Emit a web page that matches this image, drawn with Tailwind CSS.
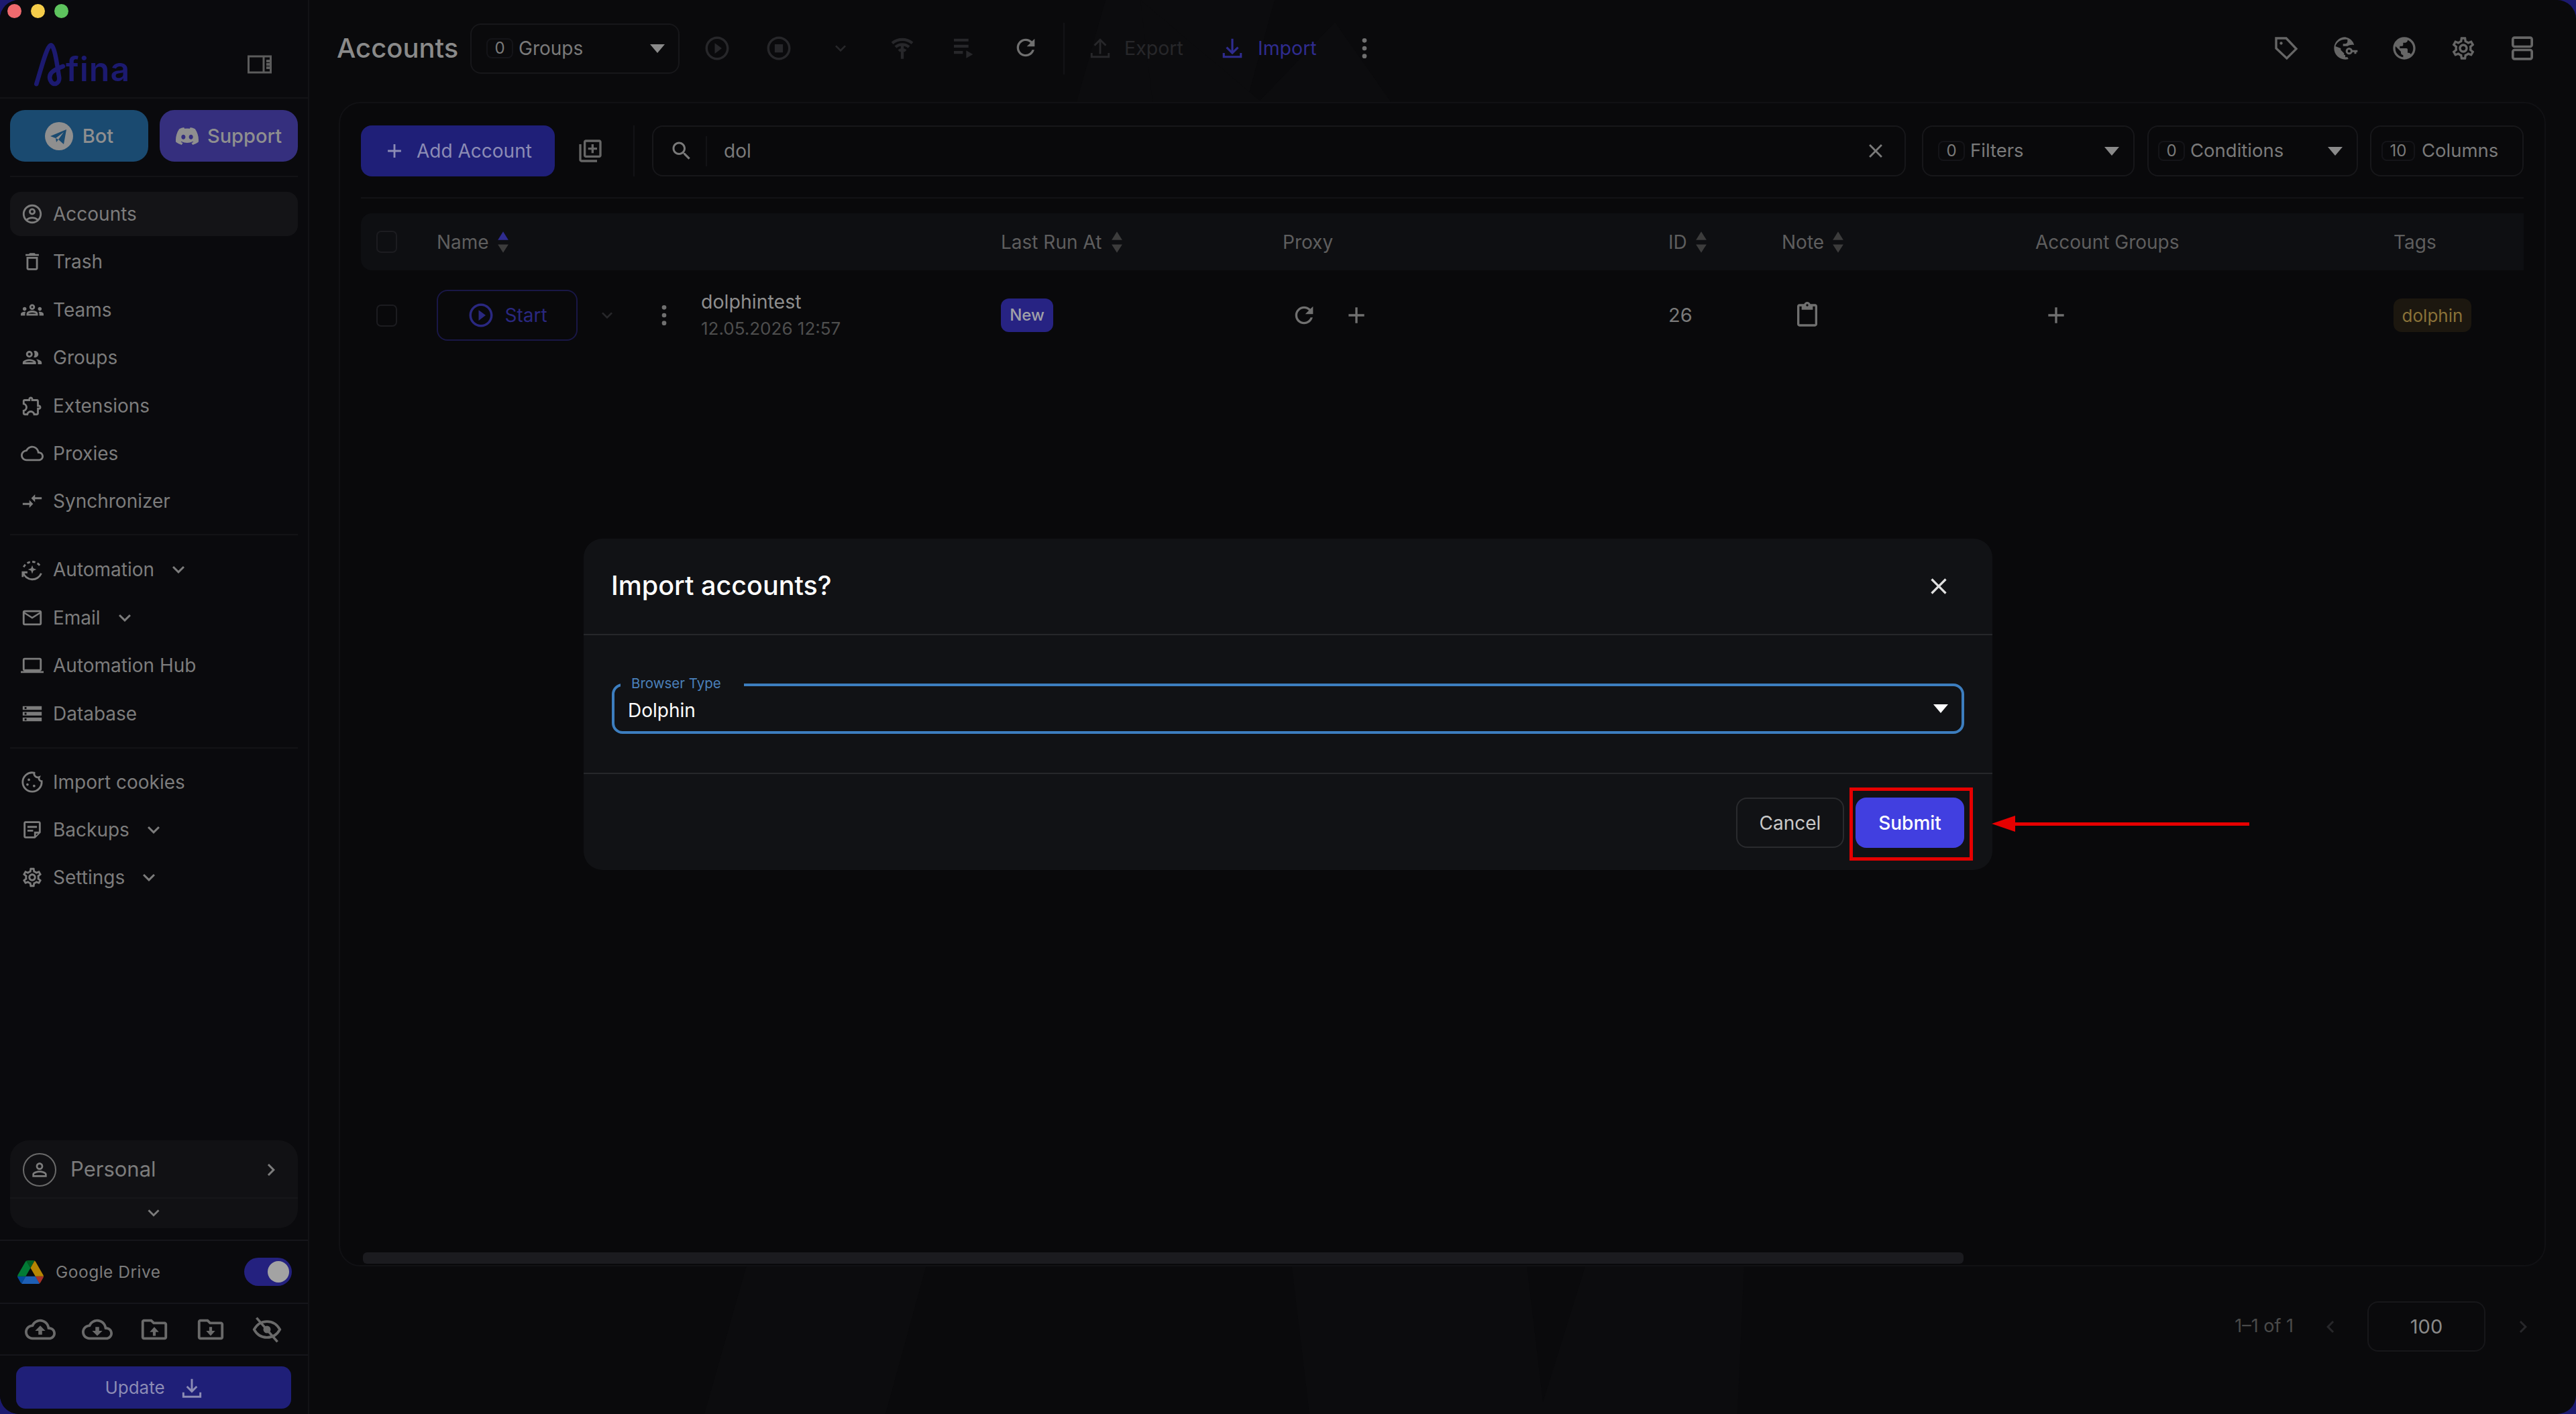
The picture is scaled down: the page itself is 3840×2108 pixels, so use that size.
<!DOCTYPE html>
<html lang="en">

<head>
    <meta charset="UTF-8">
    <title>Afina - Accounts</title>
    <script src="https://cdn.jsdelivr.net/npm/@tailwindcss/browser@4"></script>
</head>

<body class="bg-[#1c1a70] font-['Inter',sans-serif] overflow-hidden">
    <div class="relative flex h-[2108px] w-[3840px] overflow-hidden rounded-[28px] bg-[#0a0a0c]">

        <!-- window buttons -->
        <div class="absolute left-[11px] top-[6px] flex gap-[14px]">
            <span class="h-[21px] w-[21px] rounded-full bg-[#ee6a6e]"></span>
            <span class="h-[21px] w-[21px] rounded-full bg-[#f5cd4a]"></span>
            <span class="h-[21px] w-[21px] rounded-full bg-[#5ec45e]"></span>
        </div>

        <!-- sidebar -->
        <aside class="flex h-full w-[461px] shrink-0 flex-col border-r-2 border-[#131316] bg-[#0a0a0d]">
            <div class="flex h-[147px] shrink-0 items-center border-b-2 border-[#131316] pt-[47px]">
                <div class="relative ml-[50px] h-[66px] w-[145px] text-[#1c1a70]">
                    <svg class="absolute left-0 top-0 h-[66px] w-[50px]" viewBox="0 0 52 70" fill="none" stroke="currentColor" stroke-width="7" stroke-linecap="round">
                        <path d="M4 66 C12 40 20 8 26 5 C32 2 36 30 40 56 C41 66 30 70 26 60 C22 50 30 44 46 38" />
                    </svg>
                    <span class="absolute left-[48px] top-[10px] text-[50px] font-semibold leading-[60px] tracking-[1px]">fina</span>
                </div>
                <svg class="ml-auto mr-[54px] h-[30px] w-[36px] text-[#5c5c5c]" viewBox="0 0 36 30" fill="none" stroke="currentColor" stroke-width="3">
                    <rect x="1.5" y="3" width="33" height="24" />
                    <path d="M24 3v24" />
                    <path d="M28 10h7M28 15h7M28 20h7" stroke-width="4" />
                </svg>
            </div>

            <div class="flex h-[77px] shrink-0 gap-[17px] px-[15px] mt-[17px]">
                <div class="flex w-[206px] items-center justify-center gap-[14px] rounded-[22px] bg-[#1a4a70] text-[29px] font-medium text-[#8f8f8f]">
                    <svg class="h-[42px] w-[42px]" viewBox="0 0 42 42">
                        <circle cx="21" cy="21" r="21" fill="#8f8f8f" />
                        <path d="M8 21 L32 11 L28 33 L20 26 L17 30 L16 24 Z" fill="#1a4a70" />
                        <path d="M16 24 L28 15 L20 26 Z" fill="#8f8f8f" />
                    </svg>
                    <span>Bot</span>
                </div>
                <div class="flex w-[206px] items-center justify-center gap-[13px] rounded-[22px] bg-[#352f7e] text-[29px] font-medium text-[#8f8f8f]">
                    <svg class="h-[34px] w-[34px] fill-current" viewBox="0 0 24 24">
                        <path d="M20.317 4.37a19.791 19.791 0 0 0-4.885-1.515.074.074 0 0 0-.079.037c-.21.375-.444.864-.608 1.25a18.27 18.27 0 0 0-5.487 0 12.64 12.64 0 0 0-.617-1.25.077.077 0 0 0-.079-.037A19.736 19.736 0 0 0 3.677 4.37a.07.07 0 0 0-.032.027C.533 9.046-.32 13.58.099 18.057a.082.082 0 0 0 .031.057 19.9 19.9 0 0 0 5.993 3.03.078.078 0 0 0 .084-.028 14.09 14.09 0 0 0 1.226-1.994.076.076 0 0 0-.041-.106 13.107 13.107 0 0 1-1.872-.892.077.077 0 0 1-.008-.128 10.2 10.2 0 0 0 .372-.292.074.074 0 0 1 .077-.01c3.928 1.793 8.18 1.793 12.062 0a.074.074 0 0 1 .078.01c.12.098.246.198.373.292a.077.077 0 0 1-.006.127 12.299 12.299 0 0 1-1.873.892.077.077 0 0 0-.041.107c.36.698.772 1.362 1.225 1.993a.076.076 0 0 0 .084.028 19.839 19.839 0 0 0 6.002-3.03.077.077 0 0 0 .032-.054c.5-5.177-.838-9.674-3.549-13.66a.061.061 0 0 0-.031-.03zM8.02 15.33c-1.183 0-2.157-1.085-2.157-2.419 0-1.333.956-2.419 2.157-2.419 1.21 0 2.176 1.096 2.157 2.42 0 1.333-.956 2.418-2.157 2.418zm7.975 0c-1.183 0-2.157-1.085-2.157-2.419 0-1.333.955-2.419 2.157-2.419 1.21 0 2.176 1.096 2.157 2.42 0 1.333-.946 2.418-2.157 2.418z" />
                    </svg>
                    <span>Support</span>
                </div>
            </div>

            <div class="mx-[15px] mt-[21px] mb-[22px] h-[2px] shrink-0 bg-[#131316]"></div>

            <!-- main nav -->
            <nav class="flex flex-col gap-[5.4px] px-[15px] text-[28px] text-[#7c7c7c]">
                <div class="flex h-[66px] items-center gap-[13px] rounded-[16px] bg-[#141417] pl-[15px]">
                    <svg class="h-[34px] w-[36px] fill-current" viewBox="0 0 24 24"><path d="M12 2C6.48 2 2 6.48 2 12s4.48 10 10 10 10-4.48 10-10S17.52 2 12 2zM7.35 18.5C8.66 17.56 10.26 17 12 17s3.34.56 4.65 1.5c-1.31.94-2.91 1.5-4.65 1.5s-3.34-.56-4.65-1.5zm10.79-1.38C16.45 15.8 14.32 15 12 15s-4.45.8-6.14 2.12C4.7 15.73 4 13.95 4 12c0-4.42 3.58-8 8-8s8 3.58 8 8c0 1.95-.7 3.73-1.86 5.12z" /><path d="M12 6c-1.93 0-3.5 1.57-3.5 3.5S10.07 13 12 13s3.5-1.57 3.5-3.5S13.93 6 12 6zm0 5c-.83 0-1.5-.67-1.5-1.5S11.17 8 12 8s1.5.67 1.5 1.5S12.83 11 12 11z" /></svg>
                    <span>Accounts</span>
                </div>
                <div class="flex h-[66px] items-center gap-[13px] pl-[15px]">
                    <svg class="h-[34px] w-[36px] fill-current" viewBox="0 0 24 24"><path d="M16 9v10H8V9h8m-1.5-6h-5l-1 1H5v2h14V4h-3.5l-1-1zM18 7H6v12c0 1.1.9 2 2 2h8c1.1 0 2-.9 2-2V7z" /></svg>
                    <span>Trash</span>
                </div>
                <div class="flex h-[66px] items-center gap-[13px] pl-[15px]">
                    <svg class="h-[34px] w-[36px] fill-current" viewBox="0 0 24 24"><path d="M4 13c1.1 0 2-.9 2-2s-.9-2-2-2-2 .9-2 2 .9 2 2 2zm1.13 1.1c-.37-.06-.74-.1-1.13-.1-.99 0-1.93.21-2.78.58C.48 14.9 0 15.62 0 16.43V18h4.5v-1.61c0-.83.23-1.61.63-2.29zM20 13c1.1 0 2-.9 2-2s-.9-2-2-2-2 .9-2 2 .9 2 2 2zm4 3.43c0-.81-.48-1.53-1.22-1.85-.85-.37-1.79-.58-2.78-.58-.39 0-.76.04-1.13.1.4.68.63 1.46.63 2.29V18H24v-1.57zm-7.76-2.78c-1.17-.52-2.61-.9-4.24-.9-1.63 0-3.07.39-4.24.9C6.68 14.13 6 15.21 6 16.39V18h12v-1.61c0-1.18-.68-2.26-1.76-2.74zM8.07 16c.09-.23.13-.39.91-.69.97-.38 1.99-.56 3.02-.56s2.05.18 3.02.56c.77.3.81.46.91.69H8.07zM12 8c.55 0 1 .45 1 1s-.45 1-1 1-1-.45-1-1 .45-1 1-1m0-2c-1.66 0-3 1.34-3 3s1.34 3 3 3 3-1.34 3-3-1.34-3-3-3z" /></svg>
                    <span>Teams</span>
                </div>
                <div class="flex h-[66px] items-center gap-[13px] pl-[15px]">
                    <svg class="h-[34px] w-[36px] fill-current" viewBox="0 0 24 24"><path d="M9 13.75c-2.34 0-7 1.17-7 3.5V19h14v-1.75c0-2.33-4.66-3.5-7-3.5zM4.34 17c.84-.58 2.87-1.25 4.66-1.25s3.82.67 4.66 1.25H4.34zM9 12c1.93 0 3.5-1.57 3.5-3.5S10.93 5 9 5 5.5 6.57 5.5 8.5 7.07 12 9 12zm0-5c.83 0 1.5.67 1.5 1.5S9.83 10 9 10s-1.5-.67-1.5-1.5S8.17 7 9 7zm7.04 6.81c1.16.84 1.96 1.96 1.96 3.44V19h4v-1.75c0-2.02-3.5-3.17-5.96-3.44zM15 12c1.93 0 3.5-1.57 3.5-3.5S16.93 5 15 5c-.54 0-1.04.13-1.5.35.63.89 1 1.98 1 3.15s-.37 2.26-1 3.15c.46.22.96.35 1.5.35z" /></svg>
                    <span>Groups</span>
                </div>
                <div class="flex h-[66px] items-center gap-[13px] pl-[15px]">
                    <svg class="h-[34px] w-[36px] fill-current" viewBox="0 0 24 24"><path d="M10.5 4.5c.28 0 .5.22.5.5v2h6v6h2c.28 0 .5.22.5.5s-.22.5-.5.5h-2v6h-2.12c-.68-1.75-2.39-3-4.38-3s-3.7 1.25-4.38 3H4v-2.12c1.75-.68 3-2.39 3-4.38 0-1.99-1.24-3.7-2.99-4.38L4 7h6V5c0-.28.22-.5.5-.5m0-2C9.12 2.5 8 3.62 8 5H4c-1.1 0-1.99.9-1.99 2v3.8h.29c1.49 0 2.7 1.21 2.7 2.7s-1.21 2.7-2.7 2.7H2V20c0 1.1.9 2 2 2h3.8v-.3c0-1.49 1.21-2.7 2.7-2.7s2.7 1.21 2.7 2.7v.3H17c1.1 0 2-.9 2-2v-4c1.38 0 2.5-1.12 2.5-2.5S20.38 11 19 11V7c0-1.1-.9-2-2-2h-4c0-1.38-1.12-2.5-2.5-2.5z" /></svg>
                    <span>Extensions</span>
                </div>
                <div class="flex h-[66px] items-center gap-[13px] pl-[15px]">
                    <svg class="h-[34px] w-[36px] fill-current" viewBox="0 0 24 24"><path d="M12 6c2.62 0 4.88 1.86 5.39 4.43l.3 1.5 1.53.11c1.56.1 2.78 1.41 2.78 2.96 0 1.65-1.35 3-3 3H6c-2.21 0-4-1.79-4-4 0-2.05 1.53-3.76 3.56-3.97l1.07-.11.5-.95C8.08 7.14 9.94 6 12 6m0-2C9.11 4 6.6 5.64 5.35 8.04 2.34 8.36 0 10.91 0 14c0 3.31 2.69 6 6 6h13c2.76 0 5-2.24 5-5 0-2.64-2.05-4.78-4.65-4.96C18.67 6.59 15.64 4 12 4z" /></svg>
                    <span>Proxies</span>
                </div>
                <div class="flex h-[66px] items-center gap-[13px] pl-[15px]">
                    <svg class="h-[34px] w-[36px] fill-current" viewBox="0 0 24 24"><path d="M9.01 14H2v2h7.01v3L13 15l-3.99-4v3zm5.98-1v-3H22V8h-7.01V5L11 9l3.99 4z" /></svg>
                    <span>Synchronizer</span>
                </div>
            </nav>

            <div class="mx-[15px] mt-[16px] mb-[18px] h-[2px] shrink-0 bg-[#131316]"></div>

            <nav class="flex flex-col gap-[5.4px] px-[15px] text-[28px] text-[#7c7c7c]">
                <div class="flex h-[66px] items-center gap-[13px] pl-[15px]">
                    <svg class="h-[34px] w-[36px]" viewBox="0 0 24 24" fill="none" stroke="currentColor" stroke-width="2">
                        <path d="M3 9.5A10 10 0 0 1 21 9.5" stroke-dasharray="3.2 2.4" />
                        <path d="M2.5 15a10 10 0 0 0 19 1" />
                        <path d="M2 20v-5h5" />
                        <path d="M12 7.5l1.2 3.3 3.3 1.2-3.3 1.2-1.2 3.3-1.2-3.3L7.5 12l3.3-1.2z" fill="currentColor" stroke="none" />
                    </svg>
                    <span>Automation</span>
                    <svg class="ml-[5px] h-[36px] w-[36px] fill-current" viewBox="0 0 24 24"><path d="M7.41 8.59 12 13.17l4.59-4.58L18 10l-6 6-6-6z" /></svg>
                </div>
                <div class="flex h-[66px] items-center gap-[13px] pl-[15px]">
                    <svg class="h-[34px] w-[36px] fill-current" viewBox="0 0 24 24"><path d="M22 6c0-1.1-.9-2-2-2H4c-1.1 0-2 .9-2 2v12c0 1.1.9 2 2 2h16c1.1 0 2-.9 2-2V6zm-2 0l-8 5-8-5h16zm0 12H4V8l8 5 8-5v10z" /></svg>
                    <span>Email</span>
                    <svg class="ml-[5px] h-[36px] w-[36px] fill-current" viewBox="0 0 24 24"><path d="M7.41 8.59 12 13.17l4.59-4.58L18 10l-6 6-6-6z" /></svg>
                </div>
                <div class="flex h-[66px] items-center gap-[13px] pl-[15px]">
                    <svg class="h-[34px] w-[36px] fill-current" viewBox="0 0 24 24"><path d="M20 18c1.1 0 1.99-.9 1.99-2L22 6c0-1.1-.9-2-2-2H4c-1.1 0-2 .9-2 2v10c0 1.1.9 2 2 2H0v2h24v-2h-4zM4 6h16v10H4V6z" /></svg>
                    <span>Automation Hub</span>
                </div>
                <div class="flex h-[66px] items-center gap-[13px] pl-[15px]">
                    <svg class="h-[34px] w-[36px] fill-current" viewBox="0 0 24 24"><path d="M2 20h20v-4H2v4zm2-3h2v2H4v-2zM2 4v4h20V4H2zm4 3H4V5h2v2zm-4 7h20v-4H2v4zm2-3h2v2H4v-2z" /></svg>
                    <span>Database</span>
                </div>
            </nav>

            <div class="mx-[15px] mt-[17px] mb-[17px] h-[2px] shrink-0 bg-[#131316]"></div>

            <nav class="flex flex-col gap-[5.4px] px-[15px] text-[28px] text-[#7c7c7c]">
                <div class="flex h-[66px] items-center gap-[13px] pl-[15px]">
                    <svg class="h-[34px] w-[36px]" viewBox="0 0 24 24" fill="none" stroke="currentColor" stroke-width="2">
                        <path d="M21.95 10.99c-1.79-.03-3.7-1.95-2.68-4.22-2.97 1-5.78-1.59-5.19-4.56C7.11.74 2 6.41 2 12c0 5.52 4.48 10 10 10 5.89 0 10.51-5.08 9.95-11.01z" />
                        <circle cx="8.5" cy="9.5" r="1.3" fill="currentColor" stroke="none" />
                        <circle cx="7" cy="14.5" r="1.3" fill="currentColor" stroke="none" />
                        <circle cx="14" cy="16" r="1.3" fill="currentColor" stroke="none" />
                    </svg>
                    <span>Import cookies</span>
                </div>
                <div class="flex h-[66px] items-center gap-[13px] pl-[15px]">
                    <svg class="h-[34px] w-[36px] fill-current" viewBox="0 0 24 24"><path d="M19 3H5c-1.1 0-2 .9-2 2v14c0 1.1.9 2 2 2h10l6-6V5c0-1.1-.9-2-2-2zM5 19V5h14v9h-5v5H5zm11-.83V16h2.17L16 18.17zM7 8h10v2H7zm0 4h6v2H7z" /></svg>
                    <span>Backups</span>
                    <svg class="ml-[5px] h-[36px] w-[36px] fill-current" viewBox="0 0 24 24"><path d="M7.41 8.59 12 13.17l4.59-4.58L18 10l-6 6-6-6z" /></svg>
                </div>
                <div class="flex h-[66px] items-center gap-[13px] pl-[15px]">
                    <svg class="h-[34px] w-[36px] fill-current" viewBox="0 0 24 24"><path d="M19.43 12.98c.04-.32.07-.64.07-.98 0-.34-.03-.66-.07-.98l2.11-1.65c.19-.15.24-.42.12-.64l-2-3.46c-.09-.16-.26-.25-.44-.25-.06 0-.12.01-.17.03l-2.49 1c-.52-.4-1.08-.73-1.69-.98l-.38-2.65C14.46 2.18 14.25 2 14 2h-4c-.25 0-.46.18-.49.42l-.38 2.65c-.61.25-1.17.59-1.69.98l-2.49-1c-.06-.02-.12-.03-.18-.03-.17 0-.34.09-.43.25l-2 3.46c-.13.22-.07.49.12.64l2.11 1.65c-.04.32-.07.65-.07.98 0 .33.03.66.07.98l-2.11 1.65c-.19.15-.24.42-.12.64l2 3.46c.09.16.26.25.44.25.06 0 .12-.01.17-.03l2.49-1c.52.4 1.08.73 1.69.98l.38 2.65c.03.24.24.42.49.42h4c.25 0 .46-.18.49-.42l.38-2.65c.61-.25 1.17-.59 1.69-.98l2.49 1c.06.02.12.03.18.03.17 0 .34-.09.43-.25l2-3.46c.12-.22.07-.49-.12-.64l-2.11-1.65zm-1.98-1.71c.04.31.05.52.05.73 0 .21-.02.43-.05.73l-.14 1.13.89.7 1.08.84-.7 1.21-1.27-.51-1.04-.42-.9.68c-.43.32-.84.56-1.25.73l-1.06.43-.16 1.13-.2 1.35h-1.4l-.19-1.35-.16-1.13-1.06-.43c-.43-.18-.83-.41-1.23-.71l-.91-.7-1.06.43-1.27.51-.7-1.21 1.08-.84.89-.7-.14-1.13c-.03-.31-.05-.54-.05-.74s.02-.43.05-.73l.14-1.13-.89-.7-1.08-.84.7-1.21 1.27.51 1.04.42.9-.68c.43-.32.84-.56 1.25-.73l1.06-.43.16-1.13.2-1.35h1.39l.19 1.35.16 1.13 1.06.43c.43.18.83.41 1.23.71l.91.7 1.06-.43 1.27-.51.7 1.21-1.07.85-.89.7.14 1.13zM12 8c-2.21 0-4 1.79-4 4s1.79 4 4 4 4-1.79 4-4-1.79-4-4-4zm0 6c-1.1 0-2-.9-2-2s.9-2 2-2 2 .9 2 2-.9 2-2 2z" /></svg>
                    <span>Settings</span>
                    <svg class="ml-[5px] h-[36px] w-[36px] fill-current" viewBox="0 0 24 24"><path d="M7.41 8.59 12 13.17l4.59-4.58L18 10l-6 6-6-6z" /></svg>
                </div>
            </nav>

            <!-- bottom block -->
            <div class="mt-auto mx-[15px] mb-[17px] h-[131px] shrink-0 rounded-[28px] bg-[#111114] text-[#7c7c7c]">
                <div class="flex h-[87px] items-center border-b-2 border-[#17171a] pl-[19px] pr-[22px] pt-[2px]">
                    <span class="flex h-[50px] w-[50px] items-center justify-center rounded-full border-2 border-[#6a6a6a]">
                        <svg class="h-[32px] w-[32px] fill-current" viewBox="0 0 24 24"><path d="M12 6c1.1 0 2 .9 2 2s-.9 2-2 2-2-.9-2-2 .9-2 2-2m0 9c2.7 0 5.8 1.29 6 2v1H6v-.99c.2-.72 3.3-2.01 6-2.01m0-11C9.79 4 8 5.79 8 8s1.79 4 4 4 4-1.79 4-4-1.79-4-4-4zm0 9c-2.67 0-8 1.34-8 4v3h16v-3c0-2.66-5.33-4-8-4z" /></svg>
                    </span>
                    <span class="ml-[21px] text-[31px]">Personal</span>
                    <svg class="ml-auto h-[36px] w-[36px] fill-current" viewBox="0 0 24 24"><path d="M8.59 16.59 13.17 12 8.59 7.41 10 6l6 6-6 6z" /></svg>
                </div>
                <div class="flex h-[42px] items-center justify-center pr-[2px]">
                    <svg class="h-[34px] w-[34px] fill-current" viewBox="0 0 24 24"><path d="M7.41 8.59 12 13.17l4.59-4.58L18 10l-6 6-6-6z" /></svg>
                </div>
            </div>

            <div class="flex h-[94px] shrink-0 items-center border-t-2 border-[#15151a] pl-[26px] pr-[24px]">
                <svg class="h-[35px] w-[39px] opacity-70" viewBox="0 0 87.3 78">
                    <path d="m6.6 66.85 3.85 6.65c.8 1.4 1.95 2.5 3.3 3.3l13.75-23.8h-27.5c0 1.55.4 3.1 1.2 4.5z" fill="#0066da" />
                    <path d="m43.65 25-13.75-23.8c-1.35.8-2.5 1.9-3.3 3.3l-25.4 44a9.06 9.06 0 0 0 -1.2 4.5h27.5z" fill="#00ac47" />
                    <path d="m73.55 76.8c1.35-.8 2.5-1.9 3.3-3.3l1.6-2.75 7.65-13.25c.8-1.4 1.2-2.95 1.2-4.5h-27.502l5.852 11.5z" fill="#ea4335" />
                    <path d="m43.65 25 13.75-23.8c-1.35-.8-2.9-1.2-4.5-1.2h-18.5c-1.6 0-3.15.45-4.5 1.2z" fill="#00832d" />
                    <path d="m59.8 53h-32.3l-13.75 23.8c1.35.8 2.9 1.2 4.5 1.2h50.8c1.6 0 3.15-.45 4.5-1.2z" fill="#2684fc" />
                    <path d="m73.4 26.5-12.7-22c-.8-1.4-1.95-2.5-3.3-3.3l-13.75 23.8 16.15 28h27.45c0-1.55-.4-3.1-1.2-4.5z" fill="#ffba00" />
                </svg>
                <span class="ml-[18px] text-[24.5px] tracking-[0.5px] text-[#7c7c7c]">Google Drive</span>
                <div class="ml-auto flex h-[42px] w-[71px] items-center justify-end rounded-full bg-[#24217f] pr-[4px]">
                    <span class="h-[32px] w-[32px] rounded-full bg-[#a3a3a3]"></span>
                </div>
            </div>

            <div class="flex h-[77px] shrink-0 items-center justify-between border-t-2 border-[#15151a] pl-[37px] pr-[39px] text-[#6a6a6a]">
                <svg class="h-[46px] w-[46px] fill-current" viewBox="0 0 24 24"><path d="M19.35 10.04C18.67 6.59 15.64 4 12 4 9.11 4 6.6 5.64 5.35 8.04 2.34 8.36 0 10.91 0 14c0 3.31 2.69 6 6 6h13c2.76 0 5-2.24 5-5 0-2.64-2.05-4.78-4.65-4.96zM19 18H6c-2.21 0-4-1.79-4-4 0-2.05 1.53-3.76 3.56-3.97l1.07-.11.5-.95C8.08 7.14 9.94 6 12 6c2.62 0 4.88 1.86 5.39 4.43l.3 1.5 1.53.11c1.56.1 2.78 1.41 2.78 2.96 0 1.65-1.35 3-3 3zM8 13h2.55v3h2.9v-3H16l-4-4z" /></svg>
                <svg class="h-[46px] w-[46px] fill-current" viewBox="0 0 24 24"><path d="M19.35 10.04C18.67 6.59 15.64 4 12 4 9.11 4 6.6 5.64 5.35 8.04 2.34 8.36 0 10.91 0 14c0 3.31 2.69 6 6 6h13c2.76 0 5-2.24 5-5 0-2.64-2.05-4.78-4.65-4.96zM19 18H6c-2.21 0-4-1.79-4-4 0-2.05 1.53-3.76 3.56-3.97l1.07-.11.5-.95C8.08 7.14 9.94 6 12 6c2.62 0 4.88 1.86 5.39 4.43l.3 1.5 1.53.11c1.56.1 2.78 1.41 2.78 2.96 0 1.65-1.35 3-3 3zM13.45 10h-2.9v3H8l4 4 4-4h-2.55z" /></svg>
                <svg class="h-[46px] w-[46px] fill-current" viewBox="0 0 24 24"><path d="M20 6h-8l-2-2H4c-1.1 0-1.99.9-1.99 2L2 18c0 1.1.9 2 2 2h16c1.1 0 2-.9 2-2V8c0-1.1-.9-2-2-2zm0 12H4V6h5.17l2 2H20v10zM8.5 14h2.4v3h2.2v-3h2.400L12 10z" /></svg>
                <svg class="h-[46px] w-[46px] fill-current" viewBox="0 0 24 24"><path d="M20 6h-8l-2-2H4c-1.1 0-1.99.9-1.99 2L2 18c0 1.1.9 2 2 2h16c1.1 0 2-.9 2-2V8c0-1.1-.9-2-2-2zm0 12H4V6h5.17l2 2H20v10zM13.1 10h-2.200v3H8.500l3.500 4 3.500-4h-2.400z" /></svg>
                <svg class="h-[44px] w-[44px]" viewBox="0 0 24 24" fill="none" stroke="currentColor" stroke-width="2">
                    <path d="M1.5 12C4 7.5 8 5.5 12 5.5s8 2 10.5 6.5C20 16.500 16 18.500 12 18.500S4 16.500 1.500 12z" />
                    <circle cx="12" cy="12" r="3" fill="currentColor" stroke="none" />
                    <path d="M3.500 2.500 20.500 22" />
                </svg>
            </div>

            <div class="flex h-[89px] shrink-0 border-t-2 border-[#15151a] pl-[24px] pr-[25px] pt-[16px]">
                <div class="flex h-[63px] w-full items-center justify-center gap-[24px] rounded-[14px] bg-[#1f1f78] text-[26px] text-[#8c8cb5]">
                    <span>Update</span>
                    <svg class="h-[32px] w-[32px]" viewBox="0 0 24 24" fill="none" stroke="currentColor" stroke-width="2.200">
                        <path d="M12 2v14M6.500 10.500 12 16l5.500-5.500M2.500 17v5h19v-5" />
                    </svg>
                </div>
            </div>
        </aside>

        <!-- main -->
        <main class="relative flex min-w-0 flex-1 flex-col">
            <!-- faint watermark behind everything -->
            <svg class="absolute left-0 top-0 h-[2108px] w-[3379px] text-[#0c0c0e]" viewBox="461 0 3379 2108">
                <polygon fill="currentColor" points="1648,0 1050,2108 1320,2108 1900,0" />
                <polygon fill="currentColor" points="1700,0 1952,2108 2590,2108 2640,1000 2300,2090 2072,150 1990,33 1878,150" />
            </svg>

            <!-- top bar -->
            <div class="relative flex h-[144px] shrink-0 items-center pl-[41px] text-[#4a4a4a]">
                <span class="w-[199px] text-[40px] font-medium text-[#8a8a8a]">Accounts</span>
                <div class="flex h-[75px] w-[312px] items-center rounded-[16px] border-2 border-[#17171a] bg-[#0a0a0c] pl-[22px] pr-[20px] text-[28px] text-[#7a7a7a]">
                    <span class="flex h-[30px] w-[40px] items-center justify-center rounded-[8px] border-2 border-[#141418] text-[24px]">0</span>
                    <span class="ml-[8px]">Groups</span>
                    <svg class="ml-auto h-[13px] w-[22px] fill-[#8a8a8a]" viewBox="0 0 22 13"><polygon points="0,0 22,0 11,13" /></svg>
                </div>
                <div class="ml-[10px] flex text-[#27272a]">
                    <span class="flex w-[92px] justify-center"><svg class="h-[42px] w-[42px] fill-current" viewBox="0 0 24 24"><path d="M10 16.500l6-4.500-6-4.500v9zM12 2C6.480 2 2 6.480 2 12s4.480 10 10 10 10-4.480 10-10S17.520 2 12 2zm0 18c-4.410 0-8-3.590-8-8s3.590-8 8-8 8 3.590 8 8-3.590 8-8 8z" /></svg></span>
                    <span class="flex w-[92px] justify-center"><svg class="h-[42px] w-[42px] fill-current" viewBox="0 0 24 24"><path d="M12 2C6.480 2 2 6.480 2 12s4.480 10 10 10 10-4.480 10-10S17.520 2 12 2zm0 18c-4.410 0-8-3.590-8-8s3.590-8 8-8 8 3.590 8 8-3.590 8-8 8zM8.500 8.500h7v7h-7z" /></svg></span>
                    <span class="flex w-[92px] items-center justify-center"><svg class="h-[32px] w-[32px] fill-current" viewBox="0 0 24 24"><path d="M7.410 8.590 12 13.170l4.590-4.580L18 10l-6 6-6-6z" /></svg></span>
                    <span class="flex w-[92px] justify-center"><svg class="h-[40px] w-[40px]" viewBox="0 0 24 24" fill="none" stroke="currentColor" stroke-width="2.600"><path d="M3 8a14 14 0 0 1 18 0M6 11.500a9 9 0 0 1 12 0M9 15a4.500 4.500 0 0 1 6 0M12 10v12" /></svg></span>
                    <span class="flex w-[92px] justify-center"><svg class="h-[40px] w-[40px] fill-current" viewBox="0 0 24 24"><path d="M3 4h13v2.500H3zM3 9.500h13V12H3zM3 15h8v2.500H3zM14 14.500v7l6-3.500z" /></svg></span>
                    <span class="flex w-[92px] justify-center text-[#707070]"><svg class="h-[40px] w-[40px] fill-current" viewBox="0 0 24 24"><path d="M17.650 6.350C16.200 4.900 14.210 4 12 4c-4.420 0-7.990 3.580-7.990 8s3.570 8 7.990 8c3.730 0 6.840-2.550 7.730-6h-2.080c-.82 2.330-3.040 4-5.650 4-3.310 0-6-2.690-6-6s2.690-6 6-6c1.660 0 3.140.69 4.220 1.780L13 11h7V4l-2.350 2.350z" /></svg></span>
                </div>
                <span class="ml-[10px] h-[77px] w-[2px] bg-[#131316]"></span>
                <svg class="ml-[36px] h-[36px] w-[34px] text-[#27272a]" viewBox="0 0 24 24" fill="none" stroke="currentColor" stroke-width="2"><path d="M12 18V3M6 9l6-6 6 6M3 17v4h18v-4" /></svg>
                <span class="ml-[19px] w-[88px] text-[28.5px] text-[#27272a]">Export</span>
                <svg class="ml-[56px] h-[36px] w-[34px] text-[#2f2c8f]" viewBox="0 0 24 24" fill="none" stroke="currentColor" stroke-width="2.200"><path d="M12 2v15M6 11l6 6 6-6M3 17v4h18v-4" /></svg>
                <span class="ml-[21px] w-[88px] text-[28.5px] text-[#2f2c8f]">Import</span>
                <svg class="ml-[51px] h-[40px] w-[40px] fill-[#707070]" viewBox="0 0 24 24"><circle cx="12" cy="5" r="2" /><circle cx="12" cy="12" r="2" /><circle cx="12" cy="19" r="2" /></svg>

                <div class="ml-auto mr-[36px] flex text-[#666]">
                    <span class="flex w-[88px] justify-center"><svg class="h-[40px] w-[40px]" viewBox="0 0 24 24" fill="none" stroke="currentColor" stroke-width="2"><path d="M3 3h9l9 9.500-8.500 8.500L3 12z" /><circle cx="7.500" cy="7.500" r="1.300" fill="currentColor" stroke="none" /></svg></span>
                    <span class="relative flex w-[88px] justify-center"><svg class="h-[40px] w-[40px] fill-current" viewBox="0 0 24 24"><path d="M12 2C6.480 2 2 6.480 2 12s4.480 10 10 10c1 0 2-.15 2.900-.43l-1-1.700c-.6.100-1.250.130-1.900.130v-2h-1v-1.500l-3-3V12l-4.800-1.800C4.300 6.700 7.800 4 12 4c.7 0 1.300.08 2 .2V6c0 1.100-.9 2-2 2h-2v2h4c1.500-.8 4-1.500 6-.8A10 10 0 0 0 12 2z" /><circle cx="15.500" cy="14.500" r="2.200" fill="none" stroke="currentColor" stroke-width="1.800" /><path d="M17.500 14.500H23M21 14.500v2.500" stroke="currentColor" stroke-width="1.800" /></svg></span>
                    <span class="flex w-[88px] justify-center"><svg class="h-[40px] w-[40px] fill-current" viewBox="0 0 24 24"><path d="M12 2C6.480 2 2 6.480 2 12s4.480 10 10 10 10-4.480 10-10S17.520 2 12 2zM4 12c0-.61.08-1.210.21-1.780L8.990 15v1c0 1.100.9 2 2 2v1.930C7.060 19.430 4 16.070 4 12zm13.890 5.400c-.26-.81-1-1.400-1.900-1.400h-1v-3c0-.55-.45-1-1-1h-6v-2h2c.55 0 1-.45 1-1V7h2c1.100 0 2-.9 2-2v-.41C17.920 5.770 20 8.650 20 12c0 2.080-.81 3.980-2.110 5.400z" /></svg></span>
                    <span class="flex w-[88px] justify-center"><svg class="h-[40px] w-[40px] fill-current" viewBox="0 0 24 24"><path d="M19.430 12.980c.04-.32.07-.64.07-.98 0-.34-.03-.66-.07-.98l2.110-1.650c.19-.15.24-.42.12-.64l-2-3.460c-.09-.16-.26-.25-.44-.25-.06 0-.12.01-.17.03l-2.490 1c-.52-.4-1.080-.73-1.690-.98l-.38-2.650C14.460 2.180 14.250 2 14 2h-4c-.25 0-.46.18-.49.42l-.38 2.650c-.61.25-1.170.59-1.690.98l-2.490-1c-.06-.02-.12-.03-.18-.03-.17 0-.34.09-.43.25l-2 3.460c-.13.22-.07.49.12.64l2.110 1.650c-.04.32-.07.65-.07.98 0 .33.03.66.07.98l-2.110 1.650c-.19.15-.24.42-.12.64l2 3.460c.09.16.26.25.44.25.06 0 .12-.01.17-.03l2.490-1c.52.4 1.080.73 1.690.98l.38 2.650c.03.24.24.42.49.42h4c.25 0 .46-.18.49-.42l.38-2.650c.61-.25 1.170-.59 1.690-.98l2.490 1c.06.02.12.03.18.03.17 0 .34-.09.43-.25l2-3.460c.12-.22.07-.49-.12-.64l-2.110-1.650zm-1.980-1.710c.04.31.05.52.05.73 0 .21-.02.43-.05.73l-.14 1.130.89.7 1.080.84-.7 1.210-1.270-.51-1.040-.42-.9.68c-.43.32-.84.56-1.250.73l-1.060.43-.16 1.130-.2 1.350h-1.400l-.19-1.350-.16-1.130-1.060-.43c-.43-.18-.83-.41-1.230-.71l-.91-.7-1.060.43-1.270.51-.7-1.210 1.080-.84.89-.7-.14-1.130c-.03-.31-.05-.54-.05-.74s.02-.43.05-.73l.14-1.130-.89-.7-1.080-.84.7-1.210 1.270.51 1.040.42.9-.68c.43-.32.84-.56 1.250-.73l1.060-.43.16-1.130.2-1.350h1.390l.19 1.350.16 1.130 1.060.43c.43.18.83.41 1.230.71l.91.7 1.060-.43 1.270-.51.7 1.210-1.070.85-.89.7.14 1.130zM12 8c-2.210 0-4 1.790-4 4s1.790 4 4 4 4-1.790 4-4-1.790-4-4-4zm0 6c-1.100 0-2-.9-2-2s.9-2 2-2 2 .9 2 2-.9 2-2 2z" /></svg></span>
                    <span class="flex w-[88px] justify-center"><svg class="h-[40px] w-[40px]" viewBox="0 0 24 24" fill="none" stroke="currentColor" stroke-width="2.200"><rect x="3.500" y="2.500" width="17" height="8" rx="1.500" /><rect x="3.500" y="13.500" width="17" height="8" rx="1.500" /></svg></span>
                </div>
            </div>

            <!-- accounts panel -->
            <section class="relative mt-[8px] ml-[44px] mr-[45px] flex h-[1736px] shrink-0 flex-col rounded-[32px] border-2 border-[#111114] bg-[#09090b] px-[31px] pt-[33px]">
                <div class="flex h-[109px] shrink-0 items-start border-b-2 border-[#131316]">
                    <div class="flex h-[76px] w-[289px] items-center rounded-[16px] bg-[#1f1f78] pl-[33px] text-[28px] text-[#8c8cb5]">
                        <svg class="h-[34px] w-[34px] fill-current" viewBox="0 0 24 24"><path d="M19 13h-6v6h-2v-6H5v-2h6V5h2v6h6z" /></svg>
                        <span class="ml-[16px]">Add Account</span>
                    </div>
                    <span class="ml-[33px] mt-[18px] flex text-[#666]"><svg class="h-[40px] w-[40px] fill-current" viewBox="0 0 24 24"><path d="M4 6H2v14c0 1.100.9 2 2 2h14v-2H4V6zm16-4H8c-1.100 0-2 .9-2 2v12c0 1.100.9 2 2 2h12c1.100 0 2-.9 2-2V4c0-1.100-.9-2-2-2zm0 14H8V4h12v12zm-7-2h2v-3h3V9h-3V6h-2v3h-3v2h3z" /></svg></span>
                    <span class="ml-[44px] h-[76px] w-[2px] bg-[#131316]"></span>
                    <div class="ml-[26px] flex h-[76px] w-[1869px] items-center rounded-[16px] border-2 border-[#17171a] pl-[24px] pr-[26px] text-[28px] text-[#7a7a7a]">
                        <svg class="h-[36px] w-[36px] fill-current" viewBox="0 0 24 24"><path d="M15.500 14h-.79l-.28-.27C15.410 12.590 16 11.110 16 9.500 16 5.910 13.090 3 9.500 3S3 5.910 3 9.500 5.910 16 9.500 16c1.610 0 3.090-.59 4.230-1.570l.27.28v.79l5 4.990L20.490 19l-4.990-5zm-6 0C7.010 14 5 11.990 5 9.500S7.010 5 9.500 5 14 7.010 14 9.500 11.990 14 9.500 14z" /></svg>
                        <span class="ml-[18px] h-[45px] w-[2px] bg-[#131316]"></span>
                        <span class="ml-[25px]">dol</span>
                        <svg class="ml-auto h-[34px] w-[34px] fill-current" viewBox="0 0 24 24"><path d="M19 6.410 17.590 5 12 10.590 6.410 5 5 6.410 10.590 12 5 17.590 6.410 19 12 13.410 17.590 19 19 17.590 13.410 12z" /></svg>
                    </div>
                    <div class="ml-[24px] flex h-[76px] w-[317px] items-center rounded-[16px] border-2 border-[#17171a] pl-[22px] pr-[21px] text-[27.500px] text-[#7a7a7a]">
                        <span class="flex h-[30px] w-[40px] items-center justify-center rounded-[8px] border-2 border-[#141418] text-[24px]">0</span>
                        <span class="ml-[8px]">Filters</span>
                        <svg class="ml-auto h-[13px] w-[22px] fill-[#8a8a8a]" viewBox="0 0 22 13"><polygon points="0,0 22,0 11,13" /></svg>
                    </div>
                    <div class="ml-[19px] flex h-[76px] w-[314px] items-center rounded-[16px] border-2 border-[#17171a] pl-[14px] pr-[21px] text-[27.500px] text-[#7a7a7a]">
                        <span class="flex h-[30px] w-[40px] items-center justify-center rounded-[8px] border-2 border-[#141418] text-[24px]">0</span>
                        <span class="ml-[8px]">Conditions</span>
                        <svg class="ml-auto h-[13px] w-[22px] fill-[#8a8a8a]" viewBox="0 0 22 13"><polygon points="0,0 22,0 11,13" /></svg>
                    </div>
                    <div class="ml-[18px] flex h-[76px] w-[229px] items-center rounded-[16px] border-2 border-[#17171a] pl-[15px] text-[27.500px] text-[#7a7a7a]">
                        <span class="flex h-[30px] w-[50px] items-center justify-center rounded-[8px] border-2 border-[#141418] text-[24px]">10</span>
                        <span class="ml-[10px]">Columns</span>
                    </div>
                </div>

                <!-- table head -->
                <div class="mt-[22px] grid h-[85px] shrink-0 grid-cols-[113px_841px_420px_575px_169px_378px_534px_194px] items-center rounded-l-[16px] bg-[#0e0f12] text-[28px] text-[#5e5e5e]">
                    <span class="ml-[23px] h-[33px] w-[31px] rounded-[7px] border-2 border-[#1c1c20]"></span>
                    <div class="flex items-center gap-[12px]">
                        <span>Name</span>
                        <svg class="h-[36px] w-[18px]" viewBox="0 0 16 32"><polygon points="8,2 15,13 1,13" fill="#2f2c8f" /><polygon points="1,19 15,19 8,30" fill="#3c3c3c" /></svg>
                    </div>
                    <div class="flex items-center gap-[14px]">
                        <span>Last Run At</span>
                        <svg class="h-[36px] w-[18px] fill-[#3c3c3c]" viewBox="0 0 16 32"><polygon points="8,2 15,13 1,13" /><polygon points="1,19 15,19 8,30" /></svg>
                    </div>
                    <span>Proxy</span>
                    <div class="flex items-center gap-[12px]">
                        <span>ID</span>
                        <svg class="h-[36px] w-[18px] fill-[#3c3c3c]" viewBox="0 0 16 32"><polygon points="8,2 15,13 1,13" /><polygon points="1,19 15,19 8,30" /></svg>
                    </div>
                    <div class="flex items-center gap-[12px]">
                        <span>Note</span>
                        <svg class="h-[36px] w-[18px] fill-[#3c3c3c]" viewBox="0 0 16 32"><polygon points="8,2 15,13 1,13" /><polygon points="1,19 15,19 8,30" /></svg>
                    </div>
                    <span>Account Groups</span>
                    <span>Tags</span>
                </div>

                <!-- table row -->
                <div class="grid h-[134px] shrink-0 grid-cols-[113px_841px_420px_575px_169px_378px_534px_194px] items-center text-[#7a7a7a]">
                    <span class="ml-[23px] h-[33px] w-[31px] rounded-[7px] border-2 border-[#1c1c20]"></span>
                    <div class="flex items-center">
                        <div class="flex h-[76px] w-[210px] items-center justify-center gap-[14px] rounded-[16px] border-2 border-[#191746] text-[28px] text-[#2a2880]">
                            <svg class="h-[42px] w-[42px] fill-current" viewBox="0 0 24 24"><path d="M10 16.500l6-4.500-6-4.500v9zM12 2C6.480 2 2 6.480 2 12s4.480 10 10 10 10-4.480 10-10S17.520 2 12 2zm0 18c-4.410 0-8-3.590-8-8s3.590-8 8-8 8 3.590 8 8-3.590 8-8 8z" /></svg>
                            <span>Start</span>
                        </div>
                        <svg class="ml-[28px] h-[32px] w-[32px] fill-[#27272a]" viewBox="0 0 24 24"><path d="M7.410 8.590 12 13.170l4.590-4.580L18 10l-6 6-6-6z" /></svg>
                        <svg class="ml-[49px] h-[40px] w-[40px] fill-[#707070]" viewBox="0 0 24 24"><circle cx="12" cy="5" r="2" /><circle cx="12" cy="12" r="2" /><circle cx="12" cy="19" r="2" /></svg>
                        <div class="ml-[35px] flex flex-col">
                            <span class="text-[28.500px] leading-[40px] text-[#8e8e8e]">dolphintest</span>
                            <span class="text-[26px] leading-[40px] text-[#4e4e4e]">12.05.2026 12:57</span>
                        </div>
                    </div>
                    <span class="flex h-[50px] w-[78px] items-center justify-center rounded-[12px] bg-[#272383] text-[24px] font-medium text-[#a0a0a8]">New</span>
                    <div class="flex items-center text-[#707070]">
                        <svg class="ml-[12px] h-[40px] w-[40px] fill-current" viewBox="0 0 24 24"><path d="M17.650 6.350C16.200 4.900 14.210 4 12 4c-4.420 0-7.990 3.580-7.990 8s3.570 8 7.990 8c3.730 0 6.840-2.550 7.730-6h-2.080c-.82 2.330-3.040 4-5.650 4-3.310 0-6-2.690-6-6s2.690-6 6-6c1.660 0 3.140.69 4.220 1.780L13 11h7V4l-2.350 2.350z" /></svg>
                        <svg class="ml-[38px] h-[40px] w-[40px] fill-current" viewBox="0 0 24 24"><path d="M19 13h-6v6h-2v-6H5v-2h6V5h2v6h6z" /></svg>
                    </div>
                    <span class="text-[29px]">26</span>
                    <svg class="ml-[18px] h-[40px] w-[40px] fill-[#707070]" viewBox="0 0 24 24"><path d="M19 2h-4.180C14.400.84 13.300 0 12 0S9.600.84 9.180 2H5c-1.100 0-2 .9-2 2v16c0 1.100.9 2 2 2h14c1.100 0 2-.9 2-2V4c0-1.100-.9-2-2-2zm-7 0c.55 0 1 .45 1 1s-.45 1-1 1-1-.45-1-1 .45-1 1-1zm7 18H5V4h2v3h10V4h2v16z" /></svg>
                    <svg class="ml-[11px] h-[40px] w-[40px] fill-[#707070]" viewBox="0 0 24 24"><path d="M19 13h-6v6h-2v-6H5v-2h6V5h2v6h6z" /></svg>
                    <span class="flex h-[50px] w-[116px] items-center justify-center rounded-[12px] bg-[#1c170f] text-[26px] text-[#8a7238]">dolphin</span>
                </div>

                <!-- scrollbar -->
                <div class="mt-auto mb-[2px] ml-[3px] h-[17px] w-[2386px] shrink-0 rounded-[6px] bg-[#1b1b1f]"></div>
            </section>

            <!-- pagination -->
            <div class="relative flex h-[220px] items-start pt-[52px]">
                <div class="ml-auto flex h-[75px] items-center">
                    <span class="text-[27px] text-[#4a4a4a]">1–1 of 1</span>
                    <svg class="ml-[37px] h-[36px] w-[36px] fill-[#27272a]" viewBox="0 0 24 24"><path d="M15.410 16.590 10.830 12l4.580-4.590L14 6l-6 6 6 6z" /></svg>
                    <div class="ml-[37px] flex h-[75px] w-[176px] items-center justify-center rounded-[16px] border-2 border-[#17171a] text-[29px] text-[#8a8a8a]">100</div>
                    <svg class="ml-[38px] mr-[61px] h-[36px] w-[36px] fill-[#27272a]" viewBox="0 0 24 24"><path d="M8.590 16.590 13.170 12 8.590 7.410 10 6l6 6-6 6z" /></svg>
                </div>
            </div>
        </main>

        <!-- import dialog -->
        <div class="absolute left-[870px] top-[803px] flex h-[494px] w-[2100px] flex-col rounded-[28px] bg-[#111215]">
            <div class="flex h-[144px] shrink-0 items-center border-b-2 border-[#26272a] pl-[41px] pr-[60px]">
                <span class="text-[39.500px] font-medium text-white">Import accounts?</span>
                <svg class="ml-auto h-[40px] w-[40px] fill-[#e0e0e0]" viewBox="0 0 24 24"><path d="M19 6.410 17.590 5 12 10.590 6.410 5 5 6.410 10.590 12 5 17.590 6.410 19 12 13.410 17.590 19 19 17.590 13.410 12z" /></svg>
            </div>
            <div class="h-[207px] shrink-0 border-b-2 border-[#26272a] px-[42px] pt-[72px]">
                <div class="relative flex h-[75px] items-center rounded-[16px] border-[4px] border-[#3d7ebf] pl-[20px] pr-[20px] text-[28px] text-white">
                    <span class="absolute -top-[18px] left-[9px] bg-[#111215] pl-[16px] pr-[34px] text-[20.500px] leading-[28px] text-[#4a80bb]">Browser Type</span>
                    <span class="mt-[4px]">Dolphin</span>
                    <svg class="ml-auto h-[13px] w-[22px] fill-white" viewBox="0 0 22 13"><polygon points="0,0 22,0 11,13" /></svg>
                </div>
            </div>
            <div class="flex justify-end gap-[17px] pr-[42px] pt-[35px]">
                <span class="flex h-[75px] w-[161px] items-center justify-center rounded-[16px] border-2 border-[#2a2b2e] text-[28px] text-[#c8c8c8]">Cancel</span>
                <span class="flex h-[75px] w-[162px] items-center justify-center rounded-[16px] bg-[#413fe0] text-[28px] font-medium text-white">Submit</span>
            </div>
        </div>

        <!-- red annotation -->
        <div class="absolute left-[2757px] top-[1174px] h-[109px] w-[184px] border-[5px] border-[#e60000]"></div>
        <div class="absolute left-[2969px] top-[1216px] flex h-[24px] w-[384px] items-center">
            <span class="h-0 w-0 border-y-[12px] border-r-[35px] border-y-transparent border-r-[#e60000]"></span>
            <span class="h-[5px] flex-1 bg-[#e60000]"></span>
        </div>
    </div>
</body>

</html>
